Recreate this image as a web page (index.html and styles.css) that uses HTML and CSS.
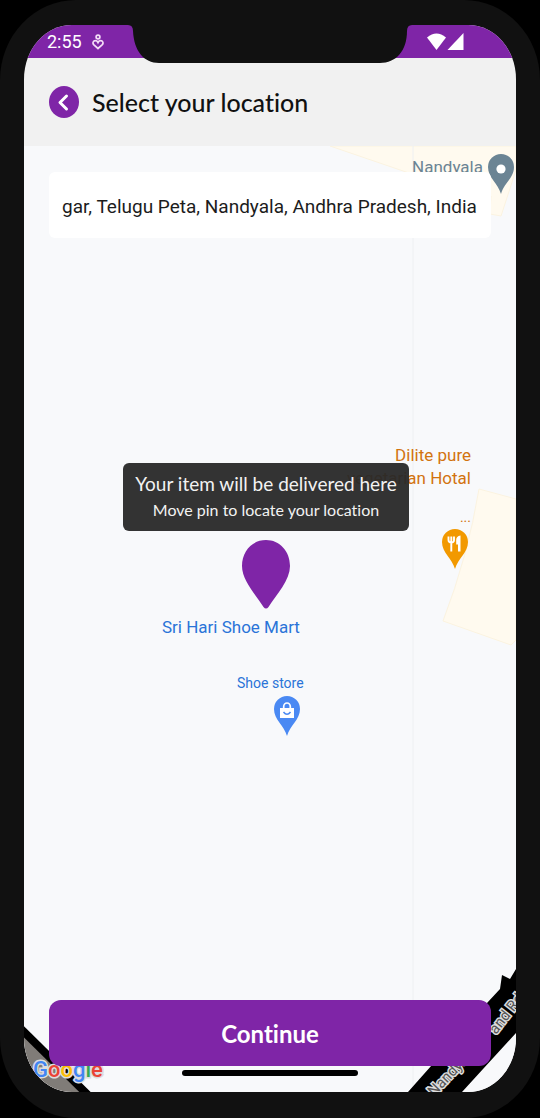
FILE: index.html
```html
<!DOCTYPE html>
<html lang="en">
<head>
<meta charset="utf-8">
<meta name="viewport" content="width=device-width, initial-scale=1">
<title>Select your location</title>
<link rel="stylesheet" href="styles.css">
</head>
<body>
<div class="phone">
  <div class="screen">
    <svg class="notch" width="284" height="39" viewBox="0 0 284 39" aria-hidden="true">
      <path d="M0 0Q5 0 5 6C6 26 16 38 31 38H252C268 38 279 26 279 6Q279 0 284 0Z" fill="#111"/>
    </svg>
    <div class="status">
      <span class="clock">2:55</span>
      <svg class="heart" width="12" height="16" viewBox="0 0 12 16" fill="none" stroke="#f3dcf6" stroke-width="1.7" aria-hidden="true">
        <circle cx="6" cy="3" r="1.9"/>
        <path d="M6 14.5L1.700 10.600C.2 8.800 1.300 6.700 3.300 6.700C4.700 6.700 5.500 7.600 6 8.600C6.500 7.600 7.300 6.700 8.700 6.700C10.700 6.700 11.800 8.800 10.300 10.600Z"/>
      </svg>
      <svg class="signal" width="37" height="18" viewBox="0 0 37 18" fill="#fff" aria-hidden="true">
        <path d="M0 4.500Q9.500-3.500 19 4.500L9.500 17Z"/>
        <path d="M36.500 0V17H20.500Z"/>
      </svg>
    </div>
    <header class="header">
      <button class="back" aria-label="Back">
        <svg width="30" height="32" viewBox="0 0 30 32" fill="none" stroke="#fff" stroke-width="3" stroke-linecap="round" stroke-linejoin="round" aria-hidden="true"><path d="M17.500 10L11 16.500L17.500 23"/></svg>
      </button>
      <h1 class="title">Select your location</h1>
    </header>
    <main class="map">
      <svg class="tiles" viewBox="0 0 492 946" preserveAspectRatio="xMidYMid slice" aria-hidden="true">
        <path d="M306 0H492V24L477 70L466 68L467 50L385 27Z" fill="#fffaef" stroke="#fbf3e0"/>
        <path d="M455 343L492 353V494L487 499L419 475Q444 410 455 343Z" fill="#fffaef" stroke="#fbf3e0"/>
        <path d="M389 0V946" stroke="#eef0f2"/>
        <path d="M0 882L66 946H0Z" fill="#807c78"/>
        <path d="M-4 882L64 949" stroke="#000" stroke-width="8"/>
        <path d="M384 946L463 857L476 843L478 829L486 833L492 823V887L438 946Z" fill="#000"/>
        <g class="road-name">
          <text transform="translate(410 951) rotate(-46)">Nandyala</text>
          <text transform="translate(472 889) rotate(-52)">and Rd</text>
        </g>
        <text class="google" x="9" y="931"><tspan fill="#4285f4">G</tspan><tspan fill="#ea4335">o</tspan><tspan fill="#fbbc05">o</tspan><tspan fill="#4285f4">g</tspan><tspan fill="#34a853">l</tspan><tspan fill="#ea4335">e</tspan></text>
      </svg>
      <span class="place town">Nandyala</span>
      <svg class="marker town-marker" width="26" height="40" viewBox="0 0 26 40" aria-hidden="true">
        <path d="M13 0A13 13 0 0 1 26 13C26 24 16 29 13 40C10 29 0 24 0 13A13 13 0 0 1 13 0Z" fill="#6b8494"/><circle cx="13" cy="15" r="4.600" fill="#fff"/>
      </svg>
      <span class="place hotel">Dilite pure<br>vegetarian Hotal</span>
      <span class="place more">...</span>
      <svg class="marker hotel-marker" width="26" height="40" viewBox="0 0 26 40" aria-hidden="true">
        <path d="M13 0A13 13 0 0 1 26 13C26 24 16 29 13 40C10 29 0 24 0 13A13 13 0 0 1 13 0Z" fill="#f29900"/>
        <path d="M6.500 7.500V11Q6.500 13.500 9.300 13.500T12 11V7.500M9.300 7.500V22.500" fill="none" stroke="#fff" stroke-width="1.900"/>
        <path d="M18.500 6.500V22.500H16V15.500H14.200V11Q14.200 7 18.500 6.500Z" fill="#fff"/>
      </svg>
      <span class="place shop">Sri Hari Shoe Mart</span>
      <span class="place kind">Shoe store</span>
      <svg class="marker shop-marker" width="26" height="40" viewBox="0 0 26 40" aria-hidden="true">
        <path d="M13 0A13 13 0 0 1 26 13C26 24 16 29 13 40C10 29 0 24 0 13A13 13 0 0 1 13 0Z" fill="#4a89f3"/>
        <path d="M6 12H20V22H6Z" fill="#fff"/>
        <path d="M9.700 13V10.500A3.300 3.500 0 0 1 16.300 10.500V13" fill="none" stroke="#fff" stroke-width="1.700"/>
        <path d="M9.500 16Q13 20.500 16.500 16" fill="none" stroke="#4a89f3" stroke-width="1.500"/>
      </svg>

      <input class="search" type="text" aria-label="Address" value="gar, Telugu Peta, Nandyala, Andhra Pradesh, India">
      <div class="target">
        <div class="tip">
          <p class="tip-main">Your item will be delivered here</p>
          <p class="tip-sub">Move pin to locate your location</p>
        </div>
        <svg width="48" height="69" viewBox="0 0 48 69" aria-hidden="true"><path d="M24 0C37.500 0 48 11 48 26C48 40 35 54 26.500 67Q24 70 21.500 67C13 54 0 40 0 26C0 11 10.500 0 24 0Z" fill="#7f25a7"/></svg>
      </div>
      <button class="continue">Continue</button>
      <div class="home"></div>
    </main>
  </div>
</div>
</body>
</html>
```
FILE: styles.css
```css
* { box-sizing: border-box; }

body {
  margin: 0;
  background: #000;
  font-family: Roboto, "Liberation Sans", sans-serif;
  font-variant-ligatures: none;
}

.phone {
  display: flex;
  min-height: 100vh;
  padding: 25px 24px 26px;
  border-radius: 76px / 80px;
  background: #111;
}

.screen {
  position: relative;
  display: flex;
  flex: 1;
  flex-direction: column;
  min-width: 0;
  overflow: hidden;
  border-radius: 48px / 54px;
  background: #f1f1f1;
}

.notch {
  position: absolute;
  top: 0;
  left: 50%;
  margin-left: -142px;
}

.status {
  display: flex;
  align-items: center;
  height: 33px;
  padding: 0 52px 0 23px;
  background: #7f25a7;
  color: #fff;
}

.clock {
  font-size: 18px;
  line-height: 32px;
}

.heart { margin-left: 10px; }
.signal { margin-left: auto; }

.header {
  display: flex;
  align-items: center;
  gap: 13px;
  height: 88px;
  padding: 0 25px;
}

.back {
  width: 30px;
  height: 32px;
  padding: 0;
  border: 0;
  border-radius: 50%;
  background: #7f25a7;
}

.back svg { display: block; }

.title {
  margin: 0;
  color: #111;
  font-family: Lato, sans-serif;
  font-size: 25px;
  font-weight: 500;
  line-height: 32px;
}

.map {
  position: relative;
  display: flex;
  flex: 1;
  flex-direction: column;
  padding: 26px 25px 16px;
  background: #f8f9fb;
}

.tiles {
  position: absolute;
  inset: 0;
  width: 100%;
  height: 100%;
}

.road-name {
  fill: #555;
  stroke: #ddd;
  stroke-width: 3px;
  paint-order: stroke;
  font-size: 15px;
}

.google {
  stroke: #ddd;
  stroke-width: 3px;
  paint-order: stroke;
  font-size: 22px;
  font-weight: 500;
}

.place,
.marker { position: absolute; }

.place {
  font-size: 17px;
  line-height: 23px;
  text-align: right;
  white-space: nowrap;
}

.town { top: 10px; right: 33px; color: #6b8494; }
.town-marker { top: 8px; right: 2px; }
.hotel { top: 298px; right: 45px; color: #d2730f; }
.more { top: 360px; right: 45px; color: #d2730f; font-size: 14px; }
.hotel-marker { top: 383px; right: 48px; }
.shop { top: 470px; left: 138px; color: #2a74d8; }
.kind { top: 526px; left: 213px; color: #2a74d8; font-size: 14px; }
.shop-marker { top: 550px; left: 250px; }

.search {
  position: relative;
  width: 100%;
  height: 66px;
  padding: 2px 13px 0;
  border: 0;
  border-radius: 6px;
  background: #fff;
  color: #1c1c1c;
  font-family: inherit;
  font-size: 19px;
}

.target {
  position: relative;
  display: flex;
  flex-direction: column;
  align-items: center;
  gap: 9px;
  margin-top: 225px;
  padding-right: 8px;
}

.tip {
  padding: 7px 12px 9px;
  border-radius: 6px;
  background: rgba(40, 40, 40, 0.95);
  color: #f2f2f2;
  font-family: Lato, sans-serif;
  text-align: center;
}

.tip-main,
.tip-sub { margin: 0; }

.tip-main { font-size: 19px; line-height: 28px; }
.tip-sub { font-size: 16px; line-height: 24px; }

.continue {
  position: relative;
  height: 66px;
  margin-top: auto;
  border: 0;
  border-radius: 12px;
  background: #7f25a7;
  color: #fff;
  font-family: Lato, sans-serif;
  font-size: 24px;
  font-weight: 700;
  font-variant-ligatures: none;
}

.home {
  position: relative;
  align-self: center;
  width: 176px;
  height: 6px;
  margin-top: 4px;
  border-radius: 3px;
  background: #000;
}
```
